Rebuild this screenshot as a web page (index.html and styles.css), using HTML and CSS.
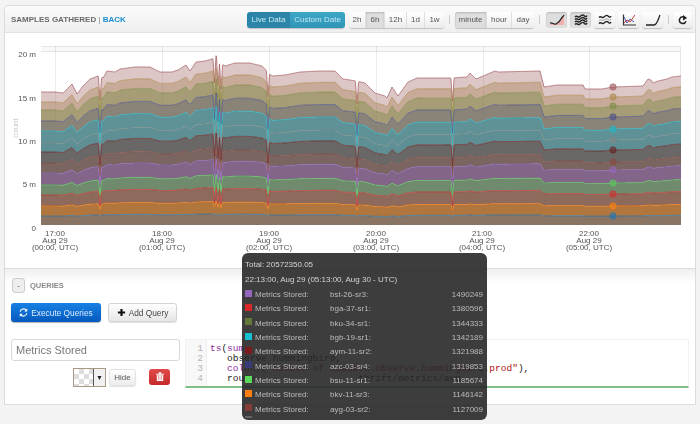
FILE: index.html
```html
<!DOCTYPE html>
<html lang="en">
<head>
<meta charset="utf-8">
<title>Samples Gathered</title>
<link rel="stylesheet" href="styles.css">
</head>
<body>
<div class="page">
  <section class="panel chart-panel">
    <header class="chart-head">
      <h1 class="title">SAMPLES GATHERED <span class="pipe">|</span> <a class="back">BACK</a></h1>
      <div class="tools">
        <div class="seg seg-blue">
          <span class="btn live">Live Data</span><span class="btn custom">Custom Date</span>
        </div>
        <div class="seg seg-range">
          <span class="btn w17">2h</span><span class="btn w19 on">6h</span><span class="btn w22">12h</span><span class="btn w18">1d</span><span class="btn w19">1w</span>
        </div>
        <i class="tsep"></i>
        <div class="seg seg-step">
          <span class="btn w32 on">minute</span><span class="btn w25">hour</span><span class="btn w22">day</span>
        </div>
        <i class="tsep tsep-wide"></i>
        <div class="icons">
          <span class="btn ico on"><svg viewBox="0 0 16 12"><path d="M1 11L1 9 4 9 7 10 10 8 13 4 15 1V11Z" fill="#f0b0b0"/><path d="M1 9C3 8 5 11 7 10S11 7 12 5 14 3 15 1" fill="none" stroke="#222" stroke-width="1.3"/></svg></span>
          <span class="btn ico on"><svg viewBox="0 0 16 12"><path d="M2 3C4 .5 5 4.500 7 2.500S10 .5 11 1.500 13 3.500 14 1.500M2 5.500C4 3 5 7 7 5S10 3 11 4 13 6 14 4M2 8C4 5.500 5 9.500 7 7.500S10 5.500 11 6.500 13 8.500 14 6.500M2 10.500C4 8 5 12 7 10S10 8 11 9 13 11 14 9" fill="none" stroke="#222" stroke-width="1.500"/></svg></span>
          <span class="btn ico"><svg viewBox="0 0 16 12"><path d="M2 3.500C4 1 5 5 7 3S10 1 11 2 13 4 14 2M2 9.500C4 7 5 11 7 9S10 7 11 8 13 10 14 8" fill="none" stroke="#222" stroke-width="1.400"/><path d="M2 6.500C4 4.500 5 7.500 7 6S10 4.500 11 5.300 13 7 14 5" fill="none" stroke="#999"/></svg></span>
          <span class="btn ico"><svg viewBox="0 0 16 12"><path d="M2.500 .5V11H15" fill="none" stroke="#333" stroke-width="1.200"/><path d="M3 3L6 9 9 5 13 8" fill="none" stroke="#4a5ab8"/><path d="M3 9L6 6 9 8 14 1" fill="none" stroke="#c84040"/></svg></span>
          <span class="btn ico"><svg viewBox="0 0 16 12"><path d="M1 11H9C12 11 13 6 15 1" fill="none" stroke="#222" stroke-width="1.300"/></svg></span>
        </div>
        <i class="tsep tsep-narrow"></i>
        <span class="btn ico refresh"><svg viewBox="0 0 12 12"><path d="M9.500 7.500A4 4 0 1 1 7 2.300" fill="none" stroke="#222" stroke-width="1.800"/><path d="M6 0L11 3.500 6 6.500Z" fill="#222"/></svg></span>
      </div>
    </header>
    <svg id="chart" class="chart" viewBox="5 33 690 235" role="img" aria-label="Stacked area chart of samples gathered"></svg>
  </section>

  <section class="panel query-panel">
    <div class="query-head">
      <span class="btn collapse">-</span>
      <span class="query-label">QUERIES</span>
    </div>
    <div class="query-actions">
      <span class="btn-lg execute"><svg class="lg-ico" viewBox="0 0 12 12"><path d="M1.500 5A4.700 4.700 0 0 1 9.800 3M10.500 7A4.700 4.700 0 0 1 2.200 9" fill="none" stroke="#fff" stroke-width="1.600"/><path d="M11 .5V4.500H7ZM1 11.500V7.500H5Z" fill="#fff"/></svg>Execute Queries</span>
      <span class="btn-lg add"><svg class="lg-ico" viewBox="0 0 10 10"><path d="M5 1V9M1 5H9" stroke="#111" stroke-width="2.400"/></svg>Add Query</span>
    </div>
    <div class="query-row">
      <div class="query-side">
        <div class="name-input">Metrics Stored</div>
        <div class="query-opts">
          <span class="picker"><i class="checker"></i><i class="caret">▼</i></span>
          <span class="btn hide">Hide</span>
          <span class="trash"><svg viewBox="0 0 10 11"><path d="M0 2H10V3.200H0ZM3.500 .3H6.500V2H3.500ZM1 4H9V11H1Z" fill="#fff"/><path d="M3.500 5V10M6.500 5V10" stroke="#d33" stroke-width=".8"/></svg></span>
        </div>
      </div>
      <div class="code">
        <div class="gutter">1<br>2<br>3<br>4</div>
<pre class="source"><span class="kw">ts</span>(<span class="kw">sum</span>,
   observe.hummingbird,
   <span class="kw">colony</span>(<span class="str">"member of audubon.observe.hummingbird.prod"</span>),
   route                  thrift/metrics/avg</pre>
      </div>
    </div>
  </section>

  <aside class="tip">
    <p class="tip-line">Total: 20572350.05</p>
    <p class="tip-line">22:13:00, Aug 29 (05:13:00, Aug 30 - UTC)</p>
    <div class="tip-rows">
      <div class="tip-row"><i class="sw c1"></i><span>Metrics Stored:</span><span>bst-26-sr3:</span><span class="val">1490249</span></div>
      <div class="tip-row"><i class="sw c2"></i><span>Metrics Stored:</span><span>bga-37-sr1:</span><span class="val">1380596</span></div>
      <div class="tip-row"><i class="sw c3"></i><span>Metrics Stored:</span><span>bku-34-sr1:</span><span class="val">1344333</span></div>
      <div class="tip-row"><i class="sw c4"></i><span>Metrics Stored:</span><span>bgb-19-sr1:</span><span class="val">1342189</span></div>
      <div class="tip-row"><i class="sw c5"></i><span>Metrics Stored:</span><span>aym-11-sr2:</span><span class="val">1321988</span></div>
      <div class="tip-row"><i class="sw c6"></i><span>Metrics Stored:</span><span>azc-03-sr4:</span><span class="val">1319853</span></div>
      <div class="tip-row"><i class="sw c7"></i><span>Metrics Stored:</span><span>bsu-11-sr1:</span><span class="val">1185674</span></div>
      <div class="tip-row"><i class="sw c8"></i><span>Metrics Stored:</span><span>bkv-11-sr3:</span><span class="val">1146142</span></div>
      <div class="tip-row"><i class="sw c9"></i><span>Metrics Stored:</span><span>ayg-03-sr2:</span><span class="val">1127009</span></div>
      <i class="sw-more"></i>
    </div>
  </aside>
</div>
<script src="chart.js"></script>
</body>
</html>
```
FILE: styles.css
```css
* { box-sizing: border-box; }
html, body { margin: 0; padding: 0; }
body {
  width: 700px;
  height: 424px;
  overflow: hidden;
  background: #f3f3f3;
  font-family: "Liberation Sans", Arial, sans-serif;
  color: #555;
}
.page {
  position: relative;
  height: 424px;
  padding: 5px 4px 0;
  filter: blur(.45px);
}
.panel { border: 1px solid #dcdcdc; background: #fff; }
.chart-panel { height: 263px; border-radius: 5px 5px 0 0; border-bottom: 0; }
.chart-head {
  height: 27px;
  display: flex;
  align-items: center;
  justify-content: space-between;
  padding: 1px 3px 0 6px;
  background: linear-gradient(#fbfbfb, #efefef);
  border-bottom: 1px solid #e2e2e2;
  border-radius: 5px 5px 0 0;
}
.title { margin: 0; font-size: 8px; font-weight: bold; color: #6a6a6a; white-space: nowrap; }
.pipe { font-weight: normal; color: #888; }
.back { color: #1a8ed0; }
.tools { display: flex; align-items: center; }
.seg, .icons { display: flex; height: 16px; }
.seg { border-radius: 3px; box-shadow: 0 1px 1px rgba(0,0,0,.2); }
.seg .btn:first-child { border-radius: 3px 0 0 3px; }
.seg .btn:last-child { border-radius: 0 3px 3px 0; }
.btn {
  display: flex;
  align-items: center;
  justify-content: center;
  height: 16px;
  font-size: 8px;
  color: #555;
  background: linear-gradient(#fff, #ececec);
  border-right: 1px solid #dedede;
}
.btn:last-child { border-right: 0; }
.btn.on { background: #dedede; box-shadow: inset 0 1px 2px rgba(0,0,0,.18); }
.seg-blue { margin-right: 4px; }
.live { width: 43px; background: #2a85a8; color: #cfe9f3; border-right: 0; }
.custom { width: 55px; background: linear-gradient(#3da6c6, #2f95b8); color: #bfe6f2; }
.w17 { width: 17px; }
.w18 { width: 18px; }
.w19 { width: 19px; }
.w22 { width: 22px; }
.w25 { width: 25px; }
.w32 { width: 32px; }
.tsep { width: 1px; height: 9px; margin: 0 5px; background: #ccc; }
.tsep-wide { margin-right: 6px; }
.tsep-narrow { margin-right: 4px; }
.icons { gap: 3px; }
.ico {
  width: 21px;
  border: 0;
  border-radius: 3px;
  box-shadow: 0 1px 1px rgba(0,0,0,.22);
}
.ico svg { width: 16px; height: 12px; }
.refresh { width: 19px; }
.refresh svg { width: 10px; height: 10px; }
.chart { display: block; width: 690px; height: 235px; }
.ax { font-size: 8px; fill: #555; }
.ax-count { font-size: 8px; fill: #c8c8c8; }

.query-panel {
  height: 137px;
  padding: 9px 6px 0 6px;
  background: linear-gradient(#efefef, #fff 14px);
}
.query-head { display: flex; align-items: center; gap: 5px; margin-left: 1px; }
.collapse {
  width: 13px;
  height: 15px;
  border: 1px solid #ccc;
  border-radius: 3px;
  font-size: 8px;
  background: #eee;
}
.collapse:last-child { border-right: 1px solid #ccc; }
.query-label { font-size: 7.5px; font-weight: bold; color: #888; }
.query-actions { display: flex; gap: 7px; margin-top: 10px; }
.btn-lg {
  display: flex;
  align-items: center;
  justify-content: center;
  gap: 3px;
  height: 19px;
  font-size: 8.3px;
  border-radius: 3px;
}
.lg-ico { width: 9px; height: 9px; }
.execute { width: 90px; color: #dcecff; background: linear-gradient(#1680e4, #0559bd); box-shadow: 0 1px 1px rgba(0,0,0,.3); }
.add { width: 69px; color: #444; background: linear-gradient(#fff, #e6e6e6); border: 1px solid #d4d4d4; box-shadow: 0 1px 1px rgba(0,0,0,.12); }
.query-row { display: flex; gap: 5px; margin-top: 17px; }
.query-side { width: 169px; }
.name-input {
  height: 22px;
  padding-left: 4px;
  line-height: 20px;
  font-size: 11px;
  color: #777;
  background: #fff;
  border: 1px solid #d8d8d8;
  border-radius: 3px;
}
.query-opts { display: flex; align-items: center; margin-top: 7px; margin-left: 62px; }
.picker { display: flex; width: 33px; height: 19px; border: 1px solid #a99883; background: #f1f1f1; }
.checker {
  display: block;
  width: 20px;
  background-color: #fff;
  background-image: linear-gradient(45deg, #ddd 25%, transparent 25%, transparent 75%, #ddd 75%), linear-gradient(45deg, #ddd 25%, transparent 25%, transparent 75%, #ddd 75%);
  background-size: 10px 10px;
  background-position: 0 0, 5px 5px;
  border-right: 1px solid #555;
}
.caret { flex: 1; font-size: 7px; font-style: normal; color: #222; text-align: center; line-height: 17px; }
.hide { width: 27px; height: 17px; margin-left: 3px; border-radius: 3px; font-size: 8px; border: 1px solid #e2e2e2; box-shadow: 0 1px 1px rgba(0,0,0,.12); }
.hide:last-child { border-right: 1px solid #e2e2e2; }
.trash {
  display: flex;
  align-items: center;
  justify-content: center;
  width: 21px;
  height: 16px;
  margin-left: 13px;
  margin-top: -2px;
  border-radius: 3px;
  background: linear-gradient(#e24a4a, #c52a2a);
}
.trash svg { width: 8px; height: 9px; }
.code {
  flex: 1;
  display: flex;
  height: 49px;
  border: 1px solid #f2f2f2;
  border-bottom: 2px solid #7fbf85;
  background: #fff;
  font-family: "Liberation Mono", "Courier New", monospace;
  font-size: 9.5px;
  line-height: 10px;
}
.gutter { width: 21px; padding: 4px 3px 0 0; text-align: right; color: #b5b5b5; background: #f8f8f8; border-right: 1px solid #eee; }
.source { margin: 0; padding: 4px 0 0 3px; font: inherit; color: #222; }
.kw { color: #8a2a9a; }
.str { color: #a11; }

.tip {
  position: absolute;
  left: 242px;
  top: 253px;
  width: 245px;
  height: 167px;
  padding: 7px 4px 0 3px;
  border-radius: 6px;
  background: rgba(40,40,40,.9);
  color: #d4d4d4;
  font-size: 8px;
  overflow: hidden;
}
.tip-line { margin: 0 0 6px 0; line-height: 9px; }
.tip-rows { display: grid; grid-auto-rows: 14.33px; margin-top: -2.500px; }
.tip-row { display: grid; grid-template-columns: 10px 75px 1fr auto; align-items: center; color: #bbb; }
.sw { display: block; width: 7px; height: 7px; margin-top: -3px; }
.c1 { background: #9467bd; }
.c2 { background: #d62728; }
.c3 { background: #637939; }
.c4 { background: #17becf; }
.c5 { background: #7b1c1c; }
.c6 { background: #393b79; }
.c7 { background: #5ad95a; }
.c8 { background: #ff7f0e; }
.c9 { background: #843c39; }
.sw-more { display: block; width: 7px; height: 2px; background: #666; }
```
FILE: chart.js
```js
(function () {
  var NS = 'http://www.w3.org/2000/svg';
  var svg = document.getElementById('chart');
  var BASE = 225, X0 = 41, X1 = 681;

  // Outline of the stack's top edge: [x, y]
  var top = [[41,92],[55,92],[63,93],[68,88],[72,84],[77,94],[83,86],[90,79],[98,76],[103,78],[107,71],[115,72],[120,69],[135,67],[150,67],[160,72],[172,72],[178,70],[186,65],[190,71],[196,62],[205,61],[212,59],[216,54],[219,62],[225,66],[235,63],[250,63],[262,66],[268,72],[272,76],[285,75],[300,72],[320,71],[335,71],[343,79],[350,80],[356,81],[365,83],[375,93],[385,96],[387,98],[392,87],[398,96],[408,82],[417,78],[450,78],[467,77],[470,73],[476,79],[483,76],[495,71],[498,72],[540,71],[544,87],[557,85],[583,85],[585,89],[602,89],[613,87],[643,86],[648,79],[651,80],[653,83],[658,81],[667,79],[672,77],[681,76]];
  var leftY  = [92,102,110,121,131,143,152,163,173,185,195,206,216];
  var rightY = [87,97,106,117,129,140,150,162,170,183,194,206,216];
  var lines  = ['#a0555c','#ad8b50','#7f8c45','#4b4f8a','#20b8c8','#7f8a8a','#6b1f1f','#8a4a42','#9467bd','#5ccc5c','#d03030','#ff7f0e','#1f77b4'];
  var fills  = ['#dcc6c6','#c7ab98','#a69c76','#8a8478','#5f9297','#5e8f94','#6a6866','#7a6560','#83658a','#6f8a6c','#8d6a5c','#b0763e','#8a7463'];
  var depth  = [.16,.17,.18,.2,.22,.24,.26,.28,.3,.33,.42,.24,.12];
  var spikes = [100,214.5,218,221,268,357,452.500];

  function el(name, attrs, text) {
    var n = document.createElementNS(NS, name);
    for (var k in attrs) n.setAttribute(k, attrs[k]);
    if (text) n.textContent = text;
    return n;
  }
  function topAt(x) {
    for (var i = 1; i < top.length; i++) {
      if (x <= top[i][0]) {
        var a = top[i-1], b = top[i];
        return a[1] + (b[1]-a[1]) * (x-a[0]) / (b[0]-a[0]);
      }
    }
    return top[top.length-1][1];
  }
  function layerY(i, x) {
    var t = Math.min(1, (x - X0) / (613 - X0));
    var fl = (BASE - leftY[i]) / (BASE - 92);
    var fr = (BASE - rightY[i]) / (BASE - 87);
    var h = (BASE - topAt(x)) * (fl + (fr - fl) * t);
    var m = 1;
    spikes.forEach(function (s) {
      var d = Math.abs(x - s) / 1.6;
      if (d < 1) m = Math.min(m, 1 - depth[i] * (1 - d));
    });
    return BASE - h * m;
  }

  var xs = [];
  for (var x = X0; x <= X1; x += 0.5) xs.push(x);

  // plot frame
  svg.appendChild(el('rect', {x: X0, y: 46, width: X1 - X0, height: 5, fill: '#f8f8f8'}));
  svg.appendChild(el('path', {d: 'M41 46.500H681M41 51.500H681', stroke: '#e6e6e6', fill: 'none'}));
  svg.appendChild(el('path', {d: 'M680.500 46V225', stroke: '#e8e8e8', fill: 'none'}));

  // bands
  lines.forEach(function (c, i) {
    var up = xs.map(function (x) { return x + ' ' + layerY(i, x).toFixed(2); });
    var lower = i < lines.length - 1
      ? xs.slice().reverse().map(function (x) { return x + ' ' + layerY(i + 1, x).toFixed(2); })
      : [X1 + ' ' + BASE, X0 + ' ' + BASE];
    svg.appendChild(el('path', {d: 'M' + up.concat(lower).join('L') + 'Z', fill: fills[i]}));
  });
  // grid
  [55.5,162.5,269.5,376.5,483.5,589.5].forEach(function (gx) {
    svg.appendChild(el('path', {d: 'M' + gx + ' 46V225', stroke: 'rgba(120,120,120,.14)', fill: 'none'}));
  });
  // lines and hover dots
  lines.forEach(function (c, i) {
    var d = xs.map(function (x) { return x + ' ' + layerY(i, x).toFixed(2); }).join('L');
    svg.appendChild(el('path', {d: 'M' + d, fill: 'none', stroke: c, 'stroke-width': .9, 'stroke-opacity': .8}));
    svg.appendChild(el('circle', {cx: 613, cy: layerY(i, 613).toFixed(1), r: 3.2, fill: c, 'fill-opacity': .6, stroke: c, 'stroke-opacity': .55}));
  });

  // y axis
  [['20 m',57],['15 m',101],['10 m',144],['5 m',187],['0',231]].forEach(function (l) {
    svg.appendChild(el('text', {x: 36, y: l[1], 'text-anchor': 'end', 'class': 'ax'}, l[0]));
  });
  svg.appendChild(el('text', {x: 0, y: 0, transform: 'translate(18 128) rotate(-90)', 'text-anchor': 'middle', 'class': 'ax-count'}, 'count'));

  // x axis
  [[55,'17:00','(00:00, UTC)'],[162,'18:00','(01:00, UTC)'],[269,'19:00','(02:00, UTC)'],[376,'20:00','(03:00, UTC)'],[482,'21:00','(04:00, UTC)'],[589,'22:00','(05:00, UTC)']].forEach(function (l) {
    [l[1],'Aug 29',l[2]].forEach(function (t, r) {
      svg.appendChild(el('text', {x: l[0], y: 235.500 + r * 7, 'text-anchor': 'middle', 'class': 'ax'}, t));
    });
  });
})();
```
